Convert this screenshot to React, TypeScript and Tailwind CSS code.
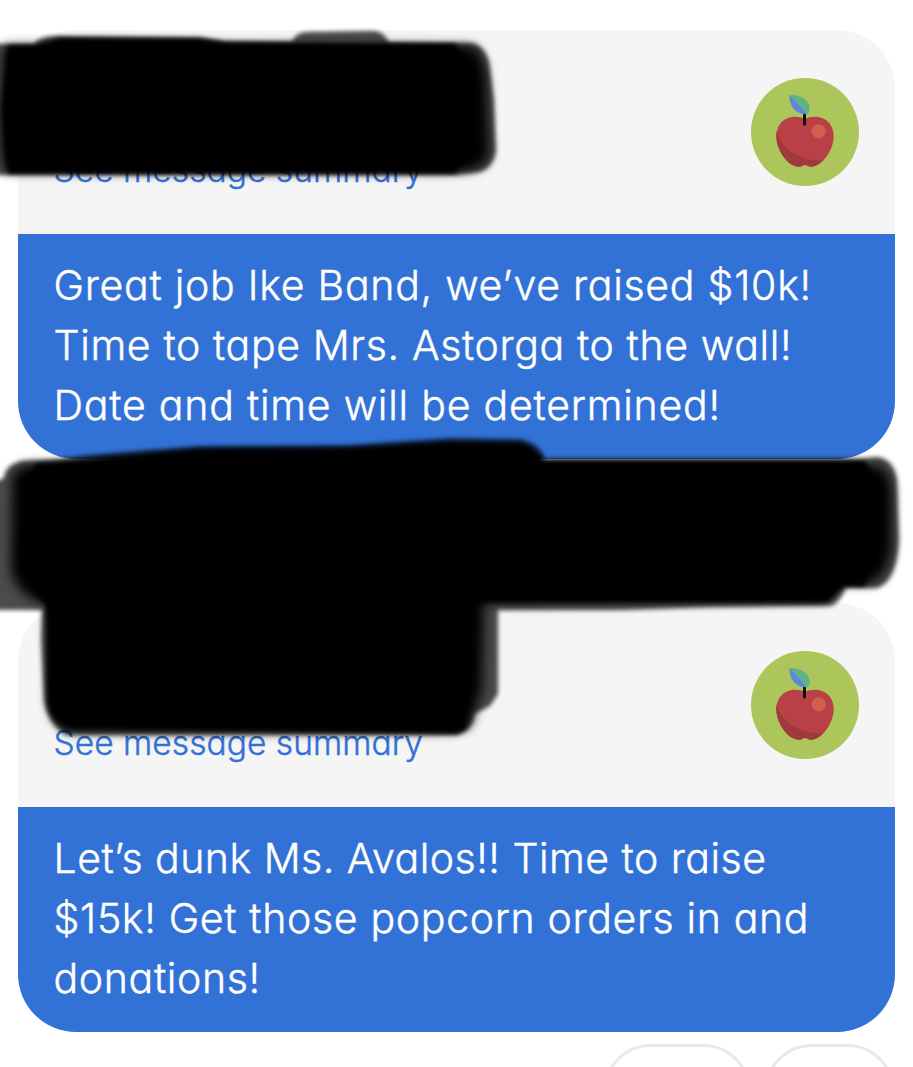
import { ReactNode } from 'react';

function AppleAvatar() {
  return (
    <svg viewBox="0 0 108 108" className="size-[108px] shrink-0">
      <circle cx="54" cy="54" r="54" fill="#adc65b" />
      <path
        d="M54 41C47 37.500 35 37.500 29 46C24 53 24.500 63 28 70.500C31.500 79 39 88.700 48 88.700C51 88.700 52 87 54 87C56 87 57 88.700 60 88.700C69 88.700 76.500 79 80 70.500C83.500 63 84 53 79 46C73 37.500 61 37.500 54 41Z"
        fill="#b84046"
      />
      <path
        d="M25.500 53C29 68 45 83 71.500 82.500C68 86.300 64 88.700 60 88.700C57 88.700 56 87 54 87C52 87 51 88.700 48 88.700C39 88.700 31.500 79 28 70.500C25.800 65.500 25 59 25.500 53Z"
        fill="#9f393e"
      />
      <circle cx="67.700" cy="53.300" r="7" fill="#cf5f51" />
      <path d="M53.500 36V46" stroke="#0d0b0b" strokeWidth="3" strokeLinecap="round" />
      <path d="M38.300 17C38.500 27 43 35.500 54 36.300C56 36.200 57 35 57.500 34Z" fill="#5b88d8" />
      <path d="M38.300 17C50 16 60 23 58.600 32.500C58.300 34.500 57.500 35.500 56 36Z" fill="#62b287" />
    </svg>
  );
}

function MessageCard({ children }: { children: ReactNode }) {
  return (
    <section className="h-[429px] overflow-hidden rounded-[58px] bg-[#f5f5f5]">
      <header className="flex h-[204px] justify-between pl-9 pr-9 pt-12">
        <a href="#" className="mt-[68px] h-12 whitespace-nowrap text-[33.5px] leading-[48px] tracking-[0.04px] text-[#3272d5]">
          See message summary
        </a>
        <AppleAvatar />
      </header>
      <div className="flex h-[225px] flex-col whitespace-nowrap bg-[#3272d7] pl-9 pt-[21px] text-[41px] leading-[60px] text-white">
        {children}
      </div>
    </section>
  );
}

// Marker strokes that hide the class names and reactions
function MarkerStrokes() {
  return (
    <svg viewBox="0 0 913 1067" className="pointer-events-none absolute inset-0 size-full">
      <defs>
        <filter id="soft" x="-5%" y="-10%" width="110%" height="120%">
          <feGaussianBlur stdDeviation="2" />
        </filter>
        <filter id="softer" x="-10%" y="-10%" width="120%" height="120%">
          <feGaussianBlur stdDeviation="6" />
        </filter>
      </defs>
      {/* faded outer edges */}
      <g filter="url(#soft)" opacity="0.7">
        <path d="M290 46Q294 32 308 32L374 31Q386 32 390 46Z" />
        <path d="M-10 44H34Q40 36 55 36L200 37L225 41L470 43Q484 44 489 62L494 100L496 150Q494 167 480 172L455 175H-10Z" />
        <path d="M4 478Q5 465 22 461L60 459Q90 454 200 446L350 445L450 438L520 439Q540 443 545 459L860 459L877 457Q894 459 897 480L899 540Q897 582 877 588H846Q838 606 828 606L710 607L620 610H-10V484Z" />
        <path d="M42 606L498 606V694L490 706L474 714Q474 730 457 735H66Q47 724 44 700L41 640Z" />
      </g>
      <g filter="url(#softer)">
        <path d="M4 46L470 46Q482 50 486 75L489 155Q484 170 460 171H4Q0 150 0 110Z" />
        <path d="M12 480Q14 467 30 465H875Q890 468 892 490V545Q888 578 870 583H840L825 600L500 603H50Q20 602 11 570Z" />
        <path d="M50 600H484L482 690L470 725Q465 730 450 731H70Q52 724 49 700Z" />
      </g>
      <g filter="url(#soft)">
        <path d="M8 46H34L60 38L200 39L225 43L455 44L466 60L468 158L455 173H8L2 110Z" />
        <path d="M72 461L200 449L350 448L450 442L520 443Q536 447 543 461L865 461L874 480V560L865 586H844L828 602H468L466 728L457 733L300 731L68 728Q50 722 48 700L46 606L26 580V480L36 464Z" />
      </g>
    </svg>
  );
}

export default function App() {
  return (
    <main className="relative h-[1067px] w-[913px] overflow-hidden bg-white pl-[17.5px] pr-[18px] pt-[30px] font-['Inter',sans-serif] font-light [font-feature-settings:'cv11'] [-webkit-text-stroke:0.45px]">
      <div className="flex flex-col gap-36">
        <MessageCard>
          <p className="tracking-[0.74px]">Great job Ike Band, we’ve raised $10k!</p>
          <p className="tracking-[0.64px]">Time to tape Mrs. Astorga to the wall!</p>
          <p className="tracking-[0.78px]">Date and time will be determined!</p>
        </MessageCard>
        <MessageCard>
          <p className="tracking-[0.49px]">Let’s dunk Ms. Avalos!! Time to raise</p>
          <p className="tracking-[0.67px]">$15k! Get those popcorn orders in and</p>
          <p className="tracking-[0.65px]">donations!</p>
        </MessageCard>
      </div>

      {/* Reactions */}
      <div className="mt-3 flex justify-end gap-[13px]">
        <div className="h-24 w-[148px] rounded-[48px] border-[3px] border-[#e9e9ed]" />
        <div className="h-24 w-[131px] rounded-[48px] border-[3px] border-[#e9e9ed]" />
      </div>
      <MarkerStrokes />
    </main>
  );
}
